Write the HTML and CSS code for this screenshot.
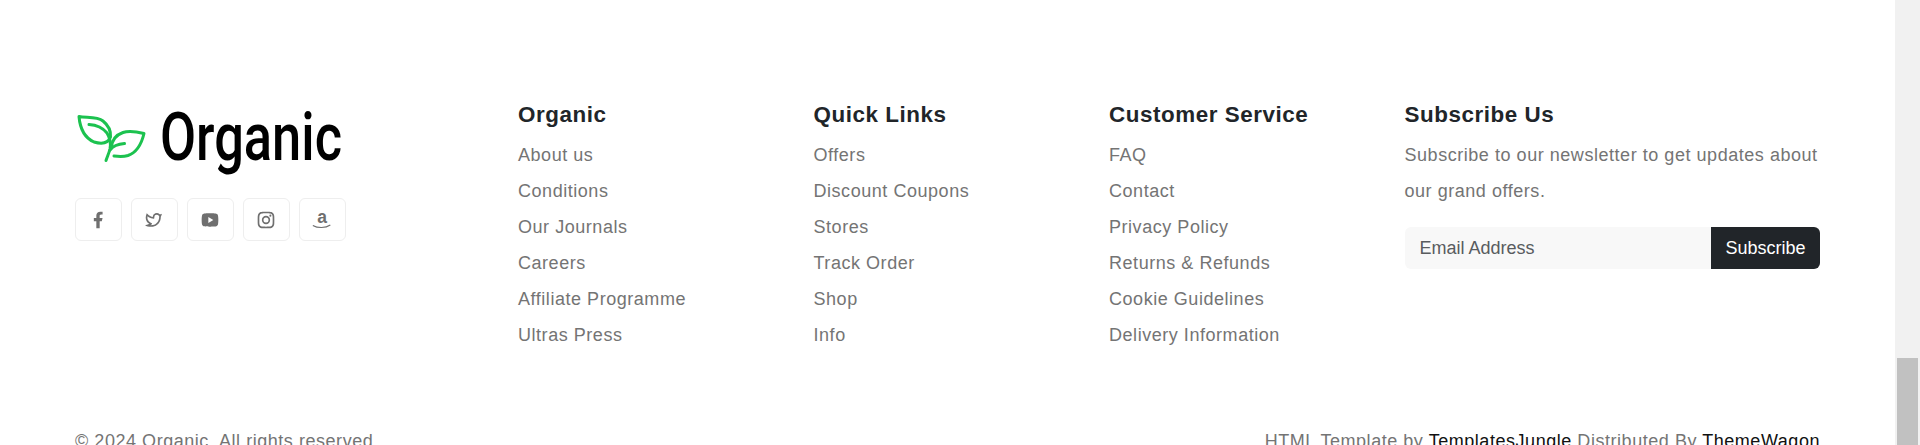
FILE: index.html
```html
<!DOCTYPE html>
<html lang="en">
<head>
<meta charset="utf-8">
<title>Organic footer</title>
<link rel="stylesheet" href="styles.css">
</head>
<body>
<div class="page">
  <main class="content">
    <footer class="footer">
      <div class="footer-grid">
        <div class="brand">
          <svg class="logo" viewBox="5 0 280 90" width="280" height="90">
            <g class="leaf">
              <path d="M9 16.500C16 18 27 16 33 21C38 25 41 31 40.500 37C38 44 31 44 24 42C15 38 10 28 9 16.500Z"/>
              <path d="M19 24.500C27 25 33 28 37 33C40 38 41 44 40 49C39 53 37.500 56 36 60.500"/>
              <path d="M40 50C43 46 48 44 54.500 43.500"/>
              <path d="M41.500 47C42 40 46 35 53 32.500C60 30 68 32 74 33.500C72 42 68 52 58 55.500C53 57 48 56.500 44 56"/>
            </g>
            <text class="logo-text" x="90" y="60" textLength="182" lengthAdjust="spacingAndGlyphs">Organic</text>
          </svg>
          <ul class="social">
            <li class="social-item"><a class="social-link" href="#" aria-label="Facebook"><svg class="social-icon" viewBox="0 0 24 24"><path d="M14 13.500h2.500l1-4H14v-2c0-1.030 0-2 2-2h1.500V2.140c-.326-.043-1.557-.14-2.857-.14C11.928 2 10 3.657 10 6.700v2.800H7v4h3V22h4v-8.500z"/></svg></a></li>
            <li class="social-item"><a class="social-link" href="#" aria-label="Twitter"><svg class="social-icon" viewBox="0 0 24 24"><path d="M15.300 5.550a2.900 2.900 0 0 0-2.900 2.847l-.028 1.575a.6.6 0 0 1-.68.583l-1.561-.212c-2.054-.28-4.022-1.226-5.910-2.799-.598 3.310.57 5.603 3.383 7.372l1.747 1.098a.6.6 0 0 1 .034.993L7.793 18.170c.947.059 1.846.017 2.592-.131 4.718-.942 7.855-4.492 7.855-10.348 0-.478-1.012-2.141-2.940-2.141zm-4.900 2.810a4.900 4.900 0 0 1 8.385-3.355c.711-.005 1.316.175 2.669-.645-.335 1.640-.5 2.352-1.214 3.331 0 7.642-4.697 11.358-9.463 12.309-3.268.652-8.020-.419-9.382-1.841.694-.054 3.514-.357 5.144-1.550C5.160 15.700-.329 12.470 3.278 3.786c1.693 1.977 3.410 3.323 5.150 4.037 1.158.475 1.442.465 1.973.538z"/></svg></a></li>
            <li class="social-item"><a class="social-link" href="#" aria-label="YouTube"><svg class="social-icon" viewBox="0 0 24 24"><path d="M21.543 6.498C22 8.280 22 12 22 12s0 3.720-.457 5.502c-.254.985-.997 1.760-1.938 2.022C17.896 20 12 20 12 20s-5.893 0-7.605-.476c-.945-.266-1.687-1.040-1.938-2.022C2 15.720 2 12 2 12s0-3.720.457-5.502c.254-.985.997-1.760 1.938-2.022C6.107 4 12 4 12 4s5.896 0 7.605.476c.945.266 1.687 1.040 1.938 2.022zM10 15.500l6-3.500-6-3.500v7z"/></svg></a></li>
            <li class="social-item"><a class="social-link" href="#" aria-label="Instagram"><svg class="social-icon" viewBox="0 0 24 24"><path d="M12 9a3 3 0 1 0 0 6 3 3 0 0 0 0-6zm0-2a5 5 0 1 1 0 10 5 5 0 0 1 0-10zm6.500-.25a1.250 1.250 0 0 1-2.500 0 1.250 1.250 0 0 1 2.500 0zM12 4c-2.474 0-2.878.007-4.029.058-.784.037-1.310.142-1.798.332-.434.168-.747.369-1.080.703a2.890 2.890 0 0 0-.704 1.080c-.19.49-.295 1.015-.331 1.798C4.006 9.075 4 9.461 4 12c0 2.474.007 2.878.058 4.029.037.783.142 1.310.331 1.797.17.435.37.748.702 1.080.337.336.65.537 1.080.703.494.191 1.020.297 1.800.333C9.075 19.994 9.461 20 12 20c2.474 0 2.878-.007 4.029-.058.782-.037 1.309-.142 1.797-.331.433-.169.748-.37 1.080-.702.337-.337.538-.65.704-1.080.19-.493.296-1.020.332-1.800.052-1.104.058-1.490.058-4.029 0-2.474-.007-2.878-.058-4.029-.037-.782-.142-1.310-.332-1.798a2.911 2.911 0 0 0-.703-1.080 2.884 2.884 0 0 0-1.080-.704c-.49-.19-1.016-.295-1.798-.331C14.925 4.006 14.539 4 12 4zm0-2c2.717 0 3.056.01 4.122.06 1.065.05 1.790.217 2.428.465.66.254 1.216.598 1.772 1.153a4.908 4.908 0 0 1 1.153 1.772c.247.637.415 1.363.465 2.428.047 1.066.06 1.405.06 4.122 0 2.717-.01 3.056-.06 4.122-.05 1.065-.218 1.790-.465 2.428a4.883 4.883 0 0 1-1.153 1.772 4.915 4.915 0 0 1-1.772 1.153c-.637.247-1.363.415-2.428.465-1.066.047-1.405.06-4.122.06-2.717 0-3.056-.01-4.122-.06-1.065-.05-1.790-.218-2.428-.465a4.890 4.890 0 0 1-1.772-1.153 4.904 4.904 0 0 1-1.153-1.772c-.248-.637-.415-1.363-.465-2.428C2.013 15.056 2 14.717 2 12c0-2.717.01-3.056.06-4.122.05-1.066.217-1.790.465-2.428a4.880 4.880 0 0 1 1.153-1.772A4.897 4.897 0 0 1 5.450 2.525c.638-.248 1.362-.415 2.428-.465C8.944 2.013 9.283 2 12 2z"/></svg></a></li>
            <li class="social-item"><a class="social-link" href="#" aria-label="Amazon"><svg class="social-icon" viewBox="0 0 24 24"><text class="amazon-a" x="12" y="16" text-anchor="middle">a</text><path class="amazon-smile" d="M1 18.500c6 3.500 15 3.500 21-.5"/></svg></a></li>
          </ul>
        </div>
        <nav class="col">
          <h3 class="col-title">Organic</h3>
          <ul class="links">
            <li class="link-item"><a class="link" href="#">About us</a></li>
            <li class="link-item"><a class="link" href="#">Conditions</a></li>
            <li class="link-item"><a class="link" href="#">Our Journals</a></li>
            <li class="link-item"><a class="link" href="#">Careers</a></li>
            <li class="link-item"><a class="link" href="#">Affiliate Programme</a></li>
            <li class="link-item"><a class="link" href="#">Ultras Press</a></li>
          </ul>
        </nav>
        <nav class="col">
          <h3 class="col-title">Quick Links</h3>
          <ul class="links">
            <li class="link-item"><a class="link" href="#">Offers</a></li>
            <li class="link-item"><a class="link" href="#">Discount Coupons</a></li>
            <li class="link-item"><a class="link" href="#">Stores</a></li>
            <li class="link-item"><a class="link" href="#">Track Order</a></li>
            <li class="link-item"><a class="link" href="#">Shop</a></li>
            <li class="link-item"><a class="link" href="#">Info</a></li>
          </ul>
        </nav>
        <nav class="col">
          <h3 class="col-title">Customer Service</h3>
          <ul class="links">
            <li class="link-item"><a class="link" href="#">FAQ</a></li>
            <li class="link-item"><a class="link" href="#">Contact</a></li>
            <li class="link-item"><a class="link" href="#">Privacy Policy</a></li>
            <li class="link-item"><a class="link" href="#">Returns &amp; Refunds</a></li>
            <li class="link-item"><a class="link" href="#">Cookie Guidelines</a></li>
            <li class="link-item"><a class="link" href="#">Delivery Information</a></li>
          </ul>
        </nav>
        <section class="col">
          <h3 class="col-title">Subscribe Us</h3>
          <p class="subscribe-text">Subscribe to our newsletter to get updates about our grand offers.</p>
          <form class="subscribe-form">
            <input class="subscribe-input" type="text" placeholder="Email Address">
            <button class="subscribe-button" type="button">Subscribe</button>
          </form>
        </section>
      </div>
      <div class="bottom">
        <p class="bottom-text">© 2024 Organic. All rights reserved.</p>
        <p class="bottom-text">HTML Template by <a class="bottom-link" href="#">TemplatesJungle</a> Distributed By <a class="bottom-link" href="#">ThemeWagon</a></p>
      </div>
    </footer>
  </main>
  <div class="scrollbar"><div class="scrollbar-thumb"></div></div>
</div>
</body>
</html>
```

FILE: styles.css
```css
* {
  box-sizing: border-box;
}

html,
body {
  margin: 0;
  height: 100%;
  overflow: hidden;
  background: #fff;
}

body {
  font-family: "Liberation Sans", Arial, sans-serif;
  font-size: 18px;
  color: #747474;
}

.page {
  display: flex;
  height: 445px;
  overflow: hidden;
}

.content {
  flex: 1;
  min-width: 0;
}

.footer {
  padding: 100px 75px 0;
}

.footer-grid {
  display: grid;
  grid-template-columns: 443px 295.5px 295.5px 295.5px 415px;
}

.logo {
  display: block;
}

.leaf path {
  fill: none;
  stroke: #1cc24f;
  stroke-width: 3;
  stroke-linecap: round;
  stroke-linejoin: round;
}

.logo-text {
  font-family: "Roboto", sans-serif;
  font-size: 67px;
  font-weight: 500;
  fill: #000;
}

.social {
  display: flex;
  gap: 9px;
  list-style: none;
  margin: 8px 0 0;
  padding: 0;
}

.social-link {
  display: flex;
  align-items: center;
  justify-content: center;
  width: 47px;
  height: 43px;
  padding-right: 2px;
  border: 1px solid #eeeeee;
  border-radius: 6px;
}

.social-icon {
  width: 20px;
  height: 20px;
  fill: #6f6f6f;
  overflow: visible;
}

.amazon-a {
  font-family: "Liberation Sans", sans-serif;
  font-size: 21px;
  font-weight: 700;
}

.amazon-smile {
  fill: none;
  stroke: #6f6f6f;
  stroke-width: 1.300;
}

.col-title {
  margin: 0;
  font-size: 22.400px;
  line-height: 30px;
  font-weight: 700;
  letter-spacing: 0.56px;
  color: #212529;
}

.links {
  list-style: none;
  margin: 7px 0 0;
  padding: 0;
}

.link-item {
  line-height: 36px;
}

.link {
  color: #747474;
  letter-spacing: 0.54px;
  text-decoration: none;
}

.subscribe-text {
  margin: 7px 0 0;
  line-height: 36px;
  letter-spacing: 0.54px;
}

.subscribe-form {
  display: flex;
  margin-top: 18px;
  height: 42px;
}

.subscribe-input {
  flex: 1;
  min-width: 0;
  padding: 0 15px;
  border: 0;
  border-radius: 6px 0 0 6px;
  outline: 0;
  background: #f8f8f8;
  font: 18px "Liberation Sans", Arial, sans-serif;
}

.subscribe-input::placeholder {
  color: #595c5f;
  opacity: 1;
}

.subscribe-button {
  padding: 0 14px;
  border: 0;
  border-radius: 0 6px 6px 0;
  background: #212529;
  color: #fff;
  font: 18px "Liberation Sans", Arial, sans-serif;
}

.bottom {
  display: flex;
  justify-content: space-between;
  margin-top: 75px;
}

.bottom-text {
  margin: 0;
  line-height: 27px;
  letter-spacing: 0.54px;
}

.bottom-link {
  color: #111;
  text-decoration: none;
}

.scrollbar {
  display: flex;
  flex-direction: column;
  justify-content: flex-end;
  flex: 0 0 25px;
  padding: 0 2px;
  background: #f1f1f1;
}

.scrollbar-thumb {
  height: 87px;
  background: #c1c1c1;
}
```
